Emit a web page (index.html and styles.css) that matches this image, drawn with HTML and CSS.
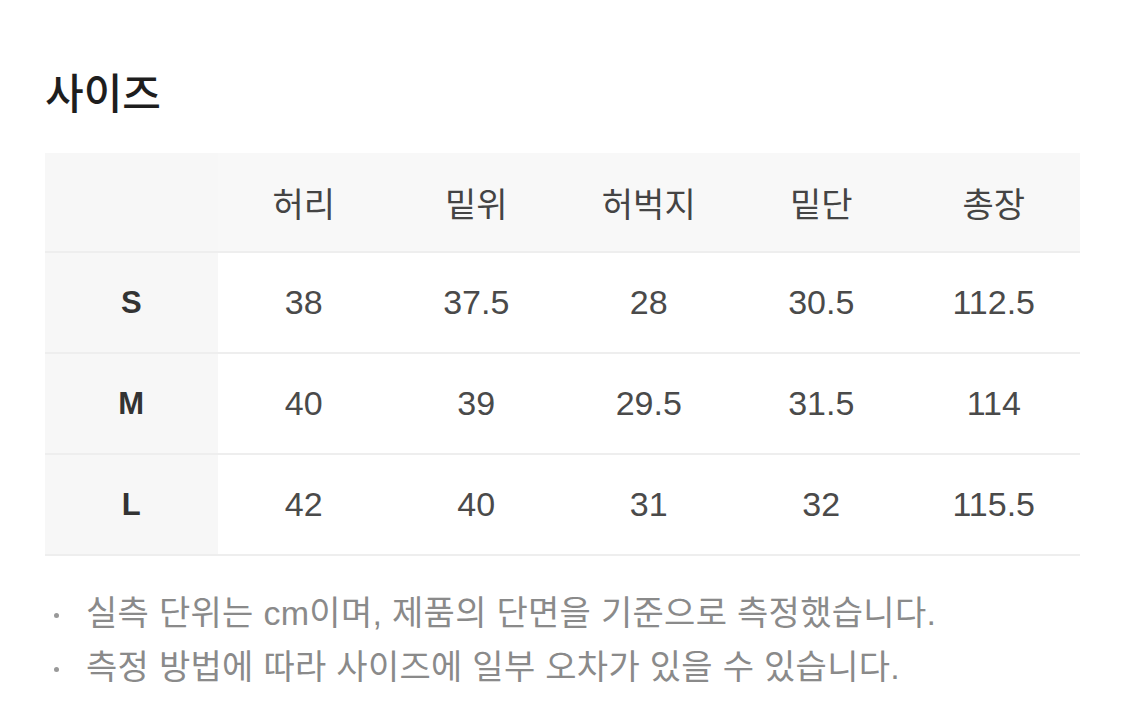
FILE: index.html
```html
<!DOCTYPE html>
<html lang="ko">
<head>
<meta charset="utf-8">
<title>사이즈</title>
<link rel="stylesheet" href="styles.css">
</head>
<body>
<section class="size">
  <h2 class="title">사이즈</h2>
  <div class="table">
    <div class="row head">
      <div class="cell label"></div>
      <div class="cell">허리</div>
      <div class="cell">밑위</div>
      <div class="cell">허벅지</div>
      <div class="cell">밑단</div>
      <div class="cell">총장</div>
    </div>
    <div class="row">
      <div class="cell label">S</div>
      <div class="cell">38</div>
      <div class="cell">37.5</div>
      <div class="cell">28</div>
      <div class="cell">30.5</div>
      <div class="cell">112.5</div>
    </div>
    <div class="row">
      <div class="cell label">M</div>
      <div class="cell">40</div>
      <div class="cell">39</div>
      <div class="cell">29.5</div>
      <div class="cell">31.5</div>
      <div class="cell">114</div>
    </div>
    <div class="row">
      <div class="cell label">L</div>
      <div class="cell">42</div>
      <div class="cell">40</div>
      <div class="cell">31</div>
      <div class="cell">32</div>
      <div class="cell">115.5</div>
    </div>
  </div>
  <ul class="notes">
    <li>실측 단위는 cm이며, 제품의 단면을 기준으로 측정했습니다.</li>
    <li>측정 방법에 따라 사이즈에 일부 오차가 있을 수 있습니다.</li>
  </ul>
</section>
</body>
</html>
```
FILE: styles.css
```css
html, body {
  margin: 0;
  padding: 0;
  background: #ffffff;
}
body {
  font-family: "Liberation Sans", "Noto Sans CJK KR", sans-serif;
  color: #444;
}
.size {
  padding: 66px 45px 0 45px;
}
.title {
  margin: 0 0 37px 0;
  font-family: "Noto Sans CJK KR", sans-serif;
  font-size: 42px;
  font-weight: 500;
  line-height: 50px;
  color: #1e1e1e;
}
.table {
  display: flex;
  flex-direction: column;
}
.row {
  display: grid;
  grid-template-columns: repeat(6, 1fr);
  height: 99px;
  border-bottom: 2px solid #eeeeee;
}
.row.head {
  height: 98px;
  background: #f8f8f8;
}
.cell {
  display: flex;
  align-items: center;
  justify-content: center;
  font-size: 34px;
  color: #4a4a4a;
}
.head .cell {
  font-family: "Noto Sans CJK KR", sans-serif;
  font-size: 34px;
  color: #444;
}
.cell.label {
  background: #f7f7f7;
  font-weight: 700;
  font-size: 31px;
  color: #333;
}
.notes {
  list-style: none;
  margin: 30px 0 0 0;
  padding: 0;
}
.notes li {
  position: relative;
  padding-left: 41px;
  font-family: "Liberation Sans", "Noto Sans CJK KR", sans-serif;
  font-size: 34px;
  letter-spacing: 0.3px;
  line-height: 54px;
  color: #8a8a8a;
}
.notes li::before {
  content: "";
  position: absolute;
  left: 9px;
  top: 27px;
  width: 5px;
  height: 5px;
  border-radius: 50%;
  background: #999;
}
```
